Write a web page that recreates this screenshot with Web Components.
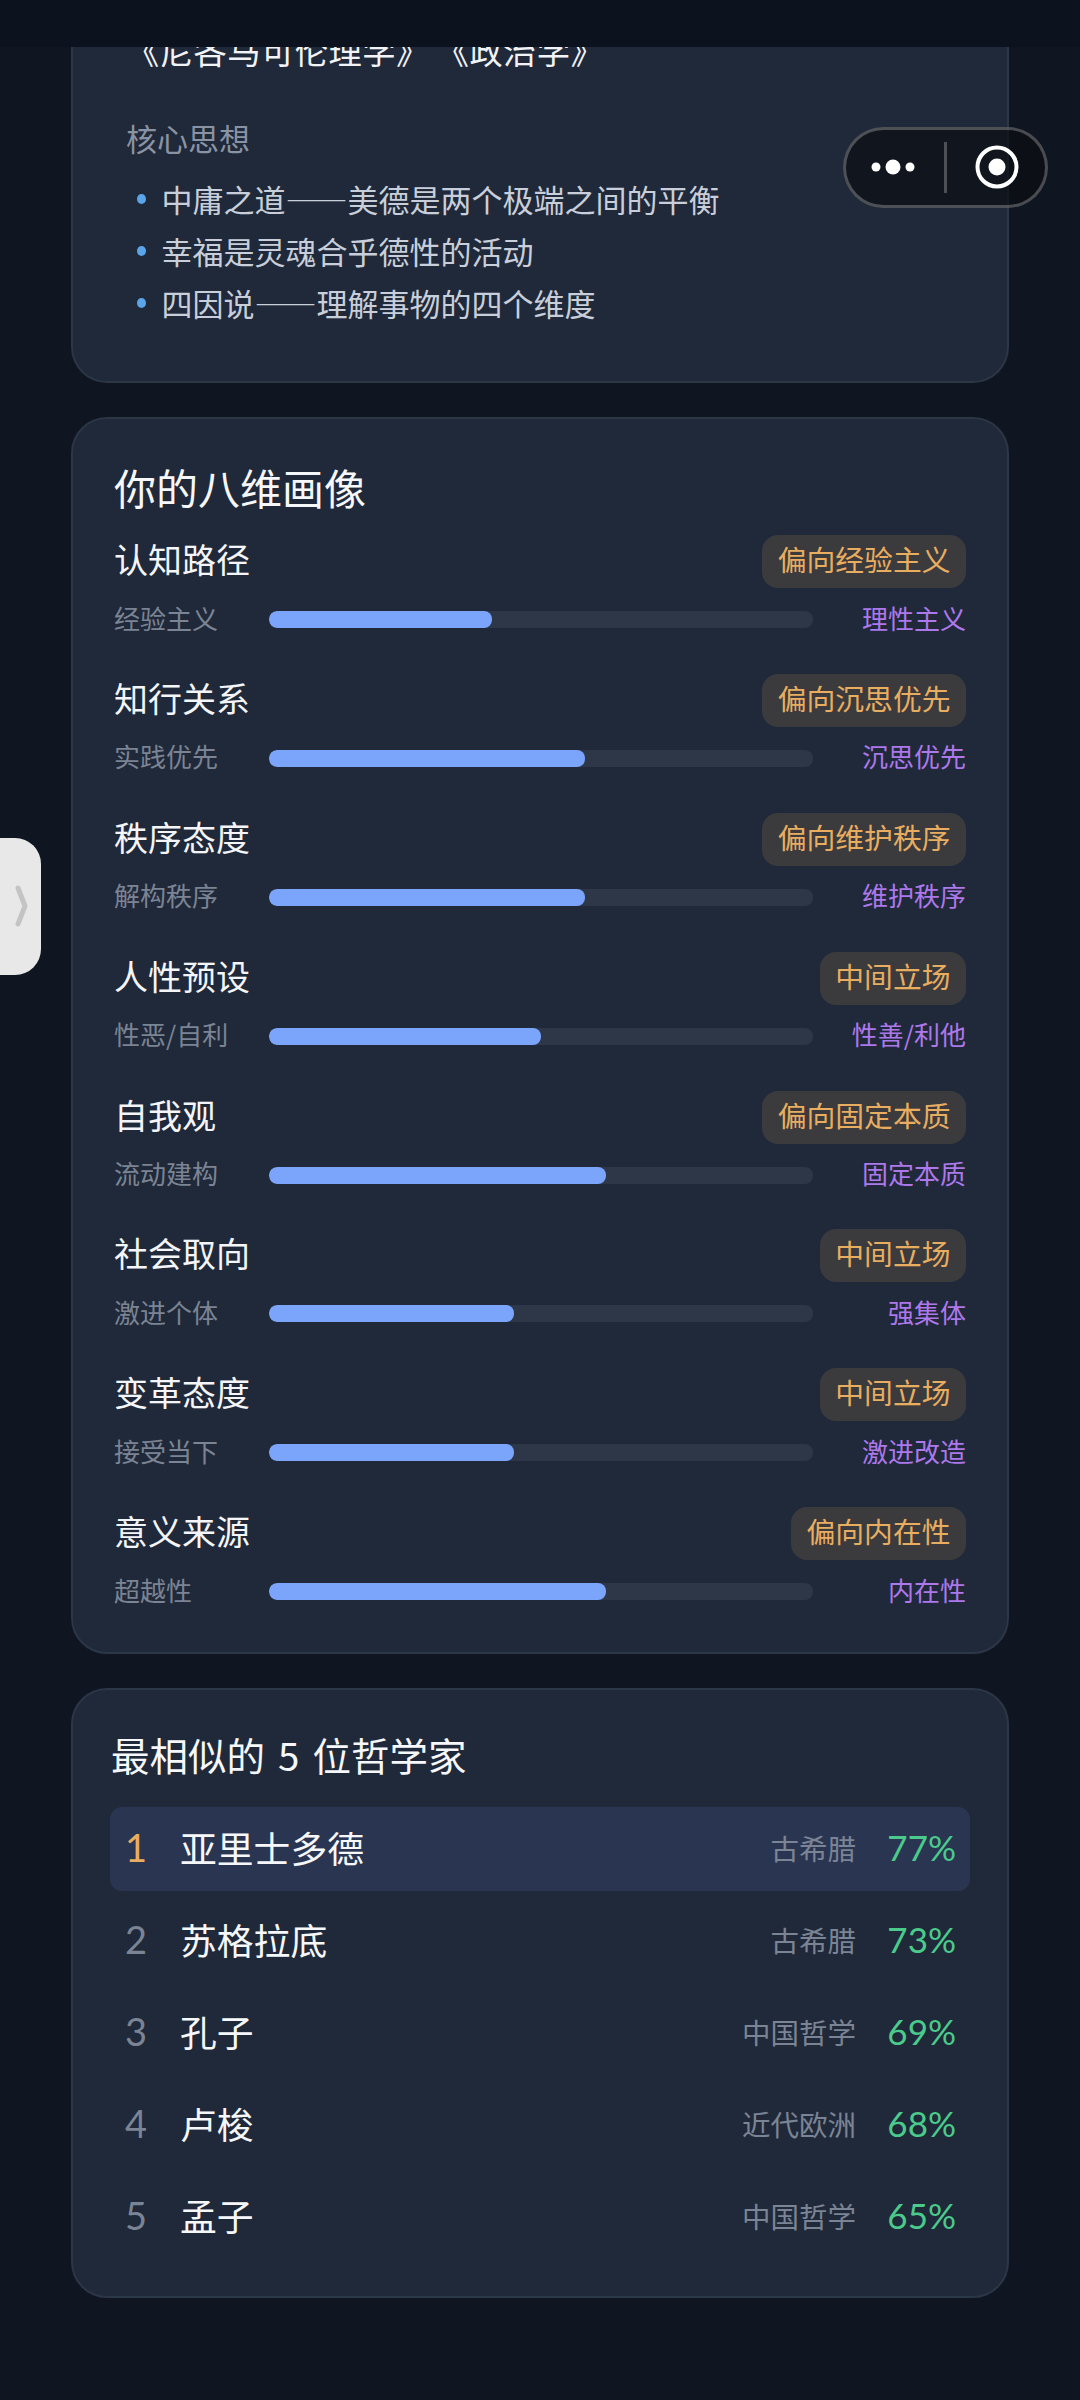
<!DOCTYPE html>
<html lang="zh"><head><meta charset="utf-8">
<style>
html,body{margin:0;padding:0;background:#0f1521;}
body{width:1080px;height:2400px;overflow:hidden;font-family:"Noto Sans CJK SC","Noto Sans",sans-serif;font-weight:400;text-spacing-trim:space-all;}
</style></head><body>
<app-page>
  <idea-card slot="scroll"></idea-card>
  <panel-card slot="scroll" heading="你的八维画像" variant="dims">
    <dim-row name="认知路径" badge="偏向经验主义" left="经验主义" right="理性主义" value="41"></dim-row>
    <dim-row name="知行关系" badge="偏向沉思优先" left="实践优先" right="沉思优先" value="58"></dim-row>
    <dim-row name="秩序态度" badge="偏向维护秩序" left="解构秩序" right="维护秩序" value="58"></dim-row>
    <dim-row name="人性预设" badge="中间立场" left="性恶/自利" right="性善/利他" value="50"></dim-row>
    <dim-row name="自我观" badge="偏向固定本质" left="流动建构" right="固定本质" value="62"></dim-row>
    <dim-row name="社会取向" badge="中间立场" left="激进个体" right="强集体" value="45"></dim-row>
    <dim-row name="变革态度" badge="中间立场" left="接受当下" right="激进改造" value="45"></dim-row>
    <dim-row name="意义来源" badge="偏向内在性" left="超越性" right="内在性" value="62"></dim-row>
  </panel-card>
  <panel-card slot="scroll" heading="最相似的 5 位哲学家" variant="list">
    <phil-row rank="1" name="亚里士多德" region="古希腊" pct="77%" top></phil-row>
    <phil-row rank="2" name="苏格拉底" region="古希腊" pct="73%"></phil-row>
    <phil-row rank="3" name="孔子" region="中国哲学" pct="69%"></phil-row>
    <phil-row rank="4" name="卢梭" region="近代欧洲" pct="68%"></phil-row>
    <phil-row rank="5" name="孟子" region="中国哲学" pct="65%"></phil-row>
  </panel-card>
  <mini-capsule slot="over"></mini-capsule>
  <side-handle slot="over"></side-handle>
</app-page>
<script>
class AppPage extends HTMLElement{constructor(){super();this.attachShadow({mode:'open'}).innerHTML=`<style>
:host{display:block;position:relative;width:1080px;height:2400px;overflow:hidden;background:#0f1521}
.top{height:47px;background:#0d131e}
.scroll{height:2353px;overflow:hidden;display:flex;flex-direction:column;gap:34px;padding:0 71px;box-sizing:border-box}
</style><div class="top"></div><div class="scroll"><slot name="scroll"></slot></div><slot name="over"></slot>`}}
class IdeaCard extends HTMLElement{constructor(){super();this.attachShadow({mode:'open'}).innerHTML=`<style>
:host{display:block;box-sizing:border-box;background:#202939;border:2px solid #2b3647;border-top:0;border-radius:0 0 36px 36px;height:336px;color:#fff;overflow:hidden}
.books{margin:-21px 0 0 53px;font-size:33.3px;line-height:48px;height:48px;color:#f1f3f6;white-space:nowrap;letter-spacing:.45px;word-spacing:-2px}
.h{margin:42px 0 0 53px;font-size:31px;line-height:44px;color:#8a93a3}
ul{list-style:none;margin:13px 0 0;padding:0 0 0 88.5px}
li{position:relative;font-size:31px;line-height:52px;color:#c9cfda;white-space:nowrap}
li::before{content:"";position:absolute;left:-25px;top:21px;width:9px;height:10px;border-radius:50%;background:#5aa5ea}
</style><div class="books">《尼各马可伦理学》 《政治学》</div><div class="h">核心思想</div>
<ul><li>中庸之道——美德是两个极端之间的平衡</li><li>幸福是灵魂合乎德性的活动</li><li>四因说——理解事物的四个维度</li></ul>`}}
class PanelCard extends HTMLElement{constructor(){super();const dims=this.getAttribute('variant')==='dims';this.attachShadow({mode:'open'}).innerHTML=`<style>
:host{display:block;box-sizing:border-box;background:#202939;border:2px solid #2b3647;border-radius:36px;
height:${dims?1237:610}px;padding:${dims?'35px 41px 0':'36.5px 37px 0 37px'}}
h2{margin:0;font-weight:inherit;color:#f6f7f9;white-space:nowrap;
font-size:${dims?'42px':'38.5px'};line-height:${dims?'66px':'54px'};margin-left:${dims?0:1}px;word-spacing:${dims?0:4.5}px}
.b{display:flex;flex-direction:column;margin-top:${dims?15:26}px;gap:${dims?'34.4px':'8px'}}
</style><h2>${this.getAttribute('heading')}</h2><div class="b"><slot></slot></div>`}}
class DimRow extends HTMLElement{constructor(){super();const a=n=>this.getAttribute(n);this.attachShadow({mode:'open'}).innerHTML=`<style>
:host{display:block}
.head{display:flex;justify-content:space-between;align-items:center;height:53px}
.name{font-size:34px;color:#f4f5f8;white-space:nowrap;padding-bottom:6px}
.badge{height:53px;line-height:48px;padding:0 15.5px;box-sizing:border-box;border-radius:16px;background:#3b3b3e;color:#e9ad60;font-size:28.8px;white-space:nowrap}
.bar{display:flex;align-items:center;height:40px;margin-top:11.5px;font-size:26px}
.l{width:155px;flex:none;color:#7b8494;white-space:nowrap;padding-bottom:5px}
.track{width:544px;flex:none;height:17px;border-radius:8px;background:#2d3748;overflow:hidden}
.fill{height:100%;border-radius:8px;background:#7ba5fb;width:${a('value')}%}
.r{flex:1;text-align:right;color:#ad78ec;white-space:nowrap;padding-bottom:5px}
</style><div class="head"><span class="name">${a('name')}</span><span class="badge">${a('badge')}</span></div>
<div class="bar"><span class="l">${a('left')}</span><div class="track"><div class="fill"></div></div><span class="r">${a('right')}</span></div>`}}
class PhilRow extends HTMLElement{constructor(){super();const a=n=>this.getAttribute(n);const top=this.hasAttribute('top');this.attachShadow({mode:'open'}).innerHTML=`<style>
:host{display:flex;align-items:center;height:84px;padding:0 14px 0 15px;border-radius:12px;${top?'background:#2a3552;':''}}
.n{width:56px;flex:none;font-family:Lato,"Noto Sans",sans-serif;font-size:38px;padding-bottom:3px;color:${top?'#e9ad60':'#7b8494'}}
.name{flex:1;font-size:36.8px;color:#f6f7f9;white-space:nowrap;margin-left:-1px;padding-bottom:3px}
.reg{font-size:28.5px;color:#7b8494;white-space:nowrap;padding-bottom:3px}
.pct{width:100px;flex:none;text-align:right;font-family:Lato,"Noto Sans",sans-serif;font-size:35px;padding-bottom:3px;color:#4bcb8b}
</style><span class="n">${a('rank')}</span><span class="name">${a('name')}</span><span class="reg">${a('region')}</span><span class="pct">${a('pct')}</span>`}}
class MiniCapsule extends HTMLElement{constructor(){super();this.attachShadow({mode:'open'}).innerHTML=`<style>
:host{position:absolute;left:843px;top:127px;width:205px;height:81px;box-sizing:border-box;display:block;border:3px solid rgba(255,255,255,.25);border-radius:41px;background:rgba(11,14,18,.7)}
svg{display:block;position:absolute;left:-3px;top:-3px}
</style><svg width="205" height="81" viewBox="0 0 205 81" fill="#fff">
<circle cx="33" cy="40" r="4.5"/><circle cx="50" cy="40" r="7.5"/><circle cx="67" cy="40" r="4.5"/>
<rect x="101" y="15" width="3" height="51" fill="rgba(255,255,255,.25)"/>
<circle cx="154" cy="40" r="19.5" fill="none" stroke="#fff" stroke-width="4"/><circle cx="154" cy="40" r="8.5"/></svg>`}}
class SideHandle extends HTMLElement{constructor(){super();this.attachShadow({mode:'open'}).innerHTML=`<style>
:host{position:absolute;left:0;top:838px;width:41px;height:137px;display:block;background:#e8e8e8;border-radius:0 26px 26px 0}
svg{display:block}
</style><svg width="41" height="137" viewBox="0 0 41 137"><path d="M18 50 L25 68 L18 86" fill="none" stroke="#c4c4c4" stroke-width="5" stroke-linecap="round" stroke-linejoin="round"/></svg>`}}
customElements.define('app-page',AppPage);customElements.define('idea-card',IdeaCard);customElements.define('panel-card',PanelCard);
customElements.define('dim-row',DimRow);customElements.define('phil-row',PhilRow);customElements.define('mini-capsule',MiniCapsule);customElements.define('side-handle',SideHandle);
</script></body></html>
